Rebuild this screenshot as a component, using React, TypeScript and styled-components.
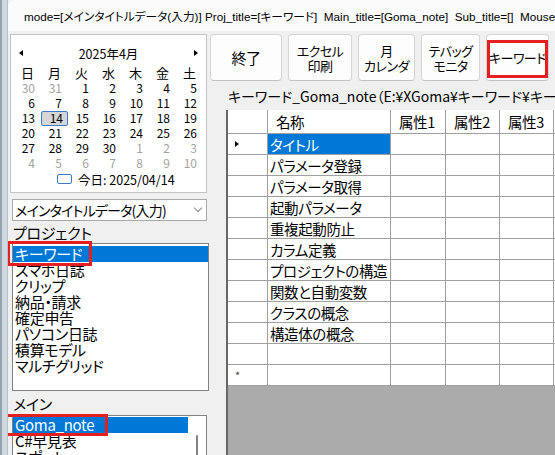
import React from 'react'
import styled, { createGlobalStyle } from 'styled-components'

const GlobalStyle = createGlobalStyle`
  html, body {
    margin: 0;
    padding: 0;
  }
  body {
    width: 555px;
    height: 455px;
    overflow: hidden;
    background: #f0f0f0;
    font-family: "Noto Sans CJK JP", "Noto Sans", sans-serif;
    color: #000;
  }
  * {
    box-sizing: border-box;
  }
`

const Screen = styled.div`
  display: flex;
  width: 555px;
  height: 455px;
  overflow: hidden;
`

const BehindStrip = styled.div`
  width: 8px;
  flex: none;
  background: linear-gradient(to right, #93a3b0 0 2px, #cfd8df 2px 7px, #b5bec6 7px);
`

const Window = styled.div`
  flex: 1;
  min-width: 0;
  display: flex;
  flex-direction: column;
  background: #f0f0f0;
  border-top-left-radius: 6px;
  overflow: hidden;
`

const TitleBar = styled.div`
  height: 31px;
  flex: none;
  display: flex;
  align-items: center;
  gap: 6px;
  padding-left: 10px;
  background: #fbfbfb;
  font-family: "Liberation Sans", "Noto Sans CJK JP", sans-serif;
  font-size: 11.7px;
  font-feature-settings: "palt";
  white-space: pre;
  overflow: hidden;
`

const Body = styled.div`
  flex: 1;
  min-height: 0;
  display: flex;
`

const LeftPane = styled.div`
  width: 201px;
  flex: none;
  display: flex;
  flex-direction: column;
  padding: 3px 0 0 4px;
`

const Calendar = styled.div`
  margin-left: -2px;
  width: 197px;
  height: 159px;
  flex: none;
  background: #fff;
  border: 1px solid #c4c4c4;
  padding: 8px 2px 0 3px;
  font-size: 12px;
`

const CalHead = styled.div`
  height: 20px;
  display: flex;
  align-items: center;
  justify-content: space-between;
  padding: 0 6px 0 5px;
  font-size: 12.5px;
`

const Arrow = styled.span<{ $dir: 'l' | 'r' }>`
  width: 0;
  height: 0;
  border-top: 3.5px solid transparent;
  border-bottom: 3.5px solid transparent;
  ${(p) => (p.$dir === 'l' ? 'border-right: 4px solid #000;' : 'border-left: 4px solid #000;')}
`

const WeekRow = styled.div`
  display: grid;
  grid-template-columns: repeat(7, 27px);
  height: 18px;
  align-items: center;
  text-align: center;
  font-size: 13px;
`

const DateGrid = styled.div`
  display: grid;
  grid-template-columns: repeat(7, 27px);
  grid-auto-rows: 15px;
`

const DateCell = styled.div<{ $muted?: boolean; $picked?: boolean }>`
  height: 15px;
  line-height: 14px;
  text-align: right;
  padding-right: 6px;
  color: ${(p) => (p.$muted ? '#a3a3a3' : '#000')};
  ${(p) =>
    p.$picked &&
    `
    background: #d6d6d6;
    border: 1.5px solid #3b79c9;
    border-radius: 2px;
    padding-right: 4px;
    line-height: 12px;
  `}
`

const TodayRow = styled.div`
  height: 16px;
  display: flex;
  align-items: center;
  padding-left: 43px;
  font-size: 12.5px;
`

const TodayBox = styled.span`
  width: 15px;
  height: 10px;
  border: 1.5px solid #3b79c9;
  border-radius: 2px;
  margin-right: 6px;
`

const Combo = styled.div`
  margin-top: 6px;
  width: 195px;
  height: 22px;
  flex: none;
  display: flex;
  align-items: center;
  justify-content: space-between;
  padding: 0 5px 0 2px;
  background: #fff;
  border: 1px solid #a9a9a9;
  font-size: 14px;
  letter-spacing: -0.8px;
  font-feature-settings: "palt";
`

const Chevron = styled.span`
  width: 6px;
  height: 6px;
  border-right: 1px solid #8a8a8a;
  border-bottom: 1px solid #8a8a8a;
  transform: rotate(45deg);
  margin-top: -4px;
`

const PaneLabel = styled.div<{ $h: number }>`
  height: ${(p) => p.$h}px;
  flex: none;
  display: flex;
  align-items: center;
  padding-left: 1px;
  font-size: 15px;
  letter-spacing: -0.3px;
  font-feature-settings: "palt";
`

const ListBox = styled.div<{ $w: number; $h?: number; $pad: number }>`
  position: relative;
  width: ${(p) => p.$w}px;
  ${(p) => (p.$h ? `height: ${p.$h}px; flex: none;` : 'flex: 1;')}
  padding-top: ${(p) => p.$pad}px;
  background: #fff;
  border: 1px solid #828282;
`

const ListItem = styled.div<{ $selected?: boolean; $w?: number }>`
  position: relative;
  height: 16px;
  line-height: 16px;
  padding-left: 2px;
  font-size: 15px;
  letter-spacing: -0.3px;
  font-feature-settings: "palt";
  white-space: nowrap;
  ${(p) => (p.$w ? `width: ${p.$w}px;` : '')}
  background: ${(p) => (p.$selected ? '#0078d7' : 'transparent')};
  color: ${(p) => (p.$selected ? '#fff' : '#000')};
`

const RedMark = styled.div<{ $l: number; $t: number; $w: number; $h: number }>`
  position: absolute;
  left: ${(p) => p.$l}px;
  top: ${(p) => p.$t}px;
  width: ${(p) => p.$w}px;
  height: ${(p) => p.$h}px;
  border: 3px solid #e3201f;
  pointer-events: none;
  z-index: 2;
`

const ScrollTrack = styled.div`
  position: absolute;
  right: 0;
  top: 0;
  bottom: 0;
  width: 18px;
  background: #fff;
`

const ScrollThumb = styled.div`
  position: absolute;
  left: 8px;
  top: 19px;
  bottom: 0;
  width: 2px;
  background: #858585;
  border-radius: 1px;
`

const RightPane = styled.div`
  flex: 1;
  min-width: 0;
  display: flex;
  flex-direction: column;
  padding-top: 3px;
  padding-left: 1px;
`

const ButtonRow = styled.div`
  height: 47px;
  flex: none;
  display: flex;
  gap: 6px;
`

const ToolButton = styled.div<{ $w: number; $big?: boolean }>`
  position: relative;
  width: ${(p) => p.$w}px;
  flex: none;
  display: flex;
  flex-direction: column;
  align-items: center;
  justify-content: center;
  background: #fdfdfd;
  border: 1px solid #d5d5d5;
  border-bottom-color: #c2c2c2;
  border-radius: 4px;
  font-size: ${(p) => (p.$big ? 15 : 13)}px;
  line-height: 15px;
  font-feature-settings: "palt";
  letter-spacing: -0.5px;
  white-space: nowrap;
`

const GridCaption = styled.div`
  height: 29px;
  flex: none;
  display: flex;
  align-items: center;
  padding-left: 18px;
  font-size: 14px;
  font-feature-settings: "palt";
  white-space: nowrap;
  overflow: hidden;
`

const GridArea = styled.div`
  flex: 1;
  min-height: 0;
  margin-left: 16px;
  background: #ababab;
  border-left: 2px solid #676767;
  overflow: hidden;
`

const GridRow = styled.div<{ $h: number }>`
  display: grid;
  grid-template-columns: 40px 123px 55px 54px 54px 54px;
  height: ${(p) => p.$h}px;
  background: #fff;
  border-bottom: 1px solid #a0a0a0;
`

const Cell = styled.div<{ $head?: boolean; $selected?: boolean }>`
  display: flex;
  align-items: center;
  border-right: 1px solid #a0a0a0;
  padding-left: ${(p) => (p.$head ? 8 : 2)}px;
  font-size: 14.5px;
  letter-spacing: -0.4px;
  font-feature-settings: "palt";
  white-space: nowrap;
  overflow: hidden;
  background: ${(p) => (p.$selected ? '#0078d7' : '#fff')};
  color: ${(p) => (p.$selected ? '#fff' : '#000')};
`

const RowHead = styled.div`
  display: flex;
  align-items: center;
  padding-left: 7px;
  border-right: 1px solid #a0a0a0;
  font-size: 11px;
  color: #444;
`

const RowArrow = styled.span`
  width: 0;
  height: 0;
  border-top: 3.5px solid transparent;
  border-bottom: 3.5px solid transparent;
  border-left: 4px solid #111;
`

const AppIcon = () => (
  <svg width="14" height="13" viewBox="0 0 14 13">
    <rect x="6" y="0.5" width="7.5" height="7.5" fill="#f6c443" stroke="#d99a1e" />
    <rect x="0.5" y="4" width="5" height="4" fill="#d93452" />
    <rect x="0.5" y="8.5" width="5" height="4" fill="#e6e6e6" stroke="#b4b4b4" strokeWidth="0.6" />
    <rect x="6.5" y="8.5" width="6.5" height="4" fill="#3d6fd6" />
  </svg>
)

const weekDays = ['日', '月', '火', '水', '木', '金', '土']

const dates: { d: number; muted?: boolean }[] = [
  { d: 30, muted: true },
  { d: 31, muted: true },
  ...Array.from({ length: 30 }, (_, i) => ({ d: i + 1 })),
  ...Array.from({ length: 10 }, (_, i) => ({ d: i + 1, muted: true })),
]

const projects = ['キーワード', 'スマホ日誌', 'クリップ', '納品・請求', '確定申告', 'パソコン日誌', '積算モデル', 'マルチグリッド']

const keywords = [
  'タイトル',
  'パラメータ登録',
  'パラメータ取得',
  '起動パラメータ',
  '重複起動防止',
  'カラム定義',
  'プロジェクトの構造',
  '関数と自動変数',
  'クラスの概念',
  '構造体の概念',
  '',
]

const App = () => {
  return (
    <>
      <GlobalStyle />
      <Screen>
        <BehindStrip />
        <Window>
          <TitleBar>
            <AppIcon />
            <span>
              {'mode=[メインタイトルデータ(入力)] Proj_title=[キーワード]  Main_title=[Goma_note]  Sub_title=[]  Mouse'}
            </span>
          </TitleBar>
          <Body>
            <LeftPane>
              <Calendar>
                <CalHead>
                  <Arrow $dir="l" />
                  <span>2025年4月</span>
                  <Arrow $dir="r" />
                </CalHead>
                <WeekRow>
                  {weekDays.map((w) => (
                    <span key={w}>{w}</span>
                  ))}
                </WeekRow>
                <DateGrid>
                  {dates.map((x, i) => (
                    <DateCell key={i} $muted={x.muted} $picked={!x.muted && x.d === 14}>
                      {x.d}
                    </DateCell>
                  ))}
                </DateGrid>
                <TodayRow>
                  <TodayBox />
                  今日: 2025/04/14
                </TodayRow>
              </Calendar>
              <Combo>
                <span>メインタイトルデータ(入力)</span>
                <Chevron />
              </Combo>
              <PaneLabel $h={22}>プロジェクト</PaneLabel>
              <ListBox $w={197} $h={148} $pad={2}>
                {projects.map((p, i) => (
                  <ListItem key={p} $selected={i === 0}>
                    {p}
                    {i === 0 && <RedMark $l={-6} $t={-5} $w={85} $h={25} />}
                  </ListItem>
                ))}
              </ListBox>
              <PaneLabel $h={24}>メイン</PaneLabel>
              <ListBox $w={195} $pad={1}>
                <ListItem $selected $w={175}>
                  Goma_note
                  <RedMark $l={-10} $t={-3} $w={105} $h={22} />
                </ListItem>
                <ListItem>C#早見表</ListItem>
                <ListItem>スポット</ListItem>
                <ScrollTrack>
                  <ScrollThumb />
                </ScrollTrack>
              </ListBox>
            </LeftPane>
            <RightPane>
              <ButtonRow>
                <ToolButton $w={72} $big>
                  終了
                </ToolButton>
                <ToolButton $w={64}>
                  <span>エクセル</span>
                  <span>印刷</span>
                </ToolButton>
                <ToolButton $w={57}>
                  <span>月</span>
                  <span>カレンダ</span>
                </ToolButton>
                <ToolButton $w={59}>
                  <span>テバッグ</span>
                  <span>モニタ</span>
                </ToolButton>
                <ToolButton $w={63}>
                  キーワード
                  <RedMark $l={0} $t={5} $w={61} $h={38} />
                </ToolButton>
              </ButtonRow>
              <GridCaption>キーワード_Goma_note（E:¥XGoma¥キーワード¥キーワード_Goma_note.csv）</GridCaption>
              <GridArea>
                <GridRow $h={24}>
                  <RowHead />
                  <Cell $head>名称</Cell>
                  <Cell $head>属性1</Cell>
                  <Cell $head>属性2</Cell>
                  <Cell $head>属性3</Cell>
                  <Cell $head>属性4</Cell>
                </GridRow>
                {keywords.map((k, i) => (
                  <GridRow key={i} $h={21}>
                    <RowHead>{i === 0 && <RowArrow />}</RowHead>
                    <Cell $selected={i === 0}>{k}</Cell>
                    <Cell />
                    <Cell />
                    <Cell />
                    <Cell />
                  </GridRow>
                ))}
                <GridRow $h={21}>
                  <RowHead>*</RowHead>
                  <Cell />
                  <Cell />
                  <Cell />
                  <Cell />
                  <Cell />
                </GridRow>
              </GridArea>
            </RightPane>
          </Body>
        </Window>
      </Screen>
    </>
  )
}

export default App
